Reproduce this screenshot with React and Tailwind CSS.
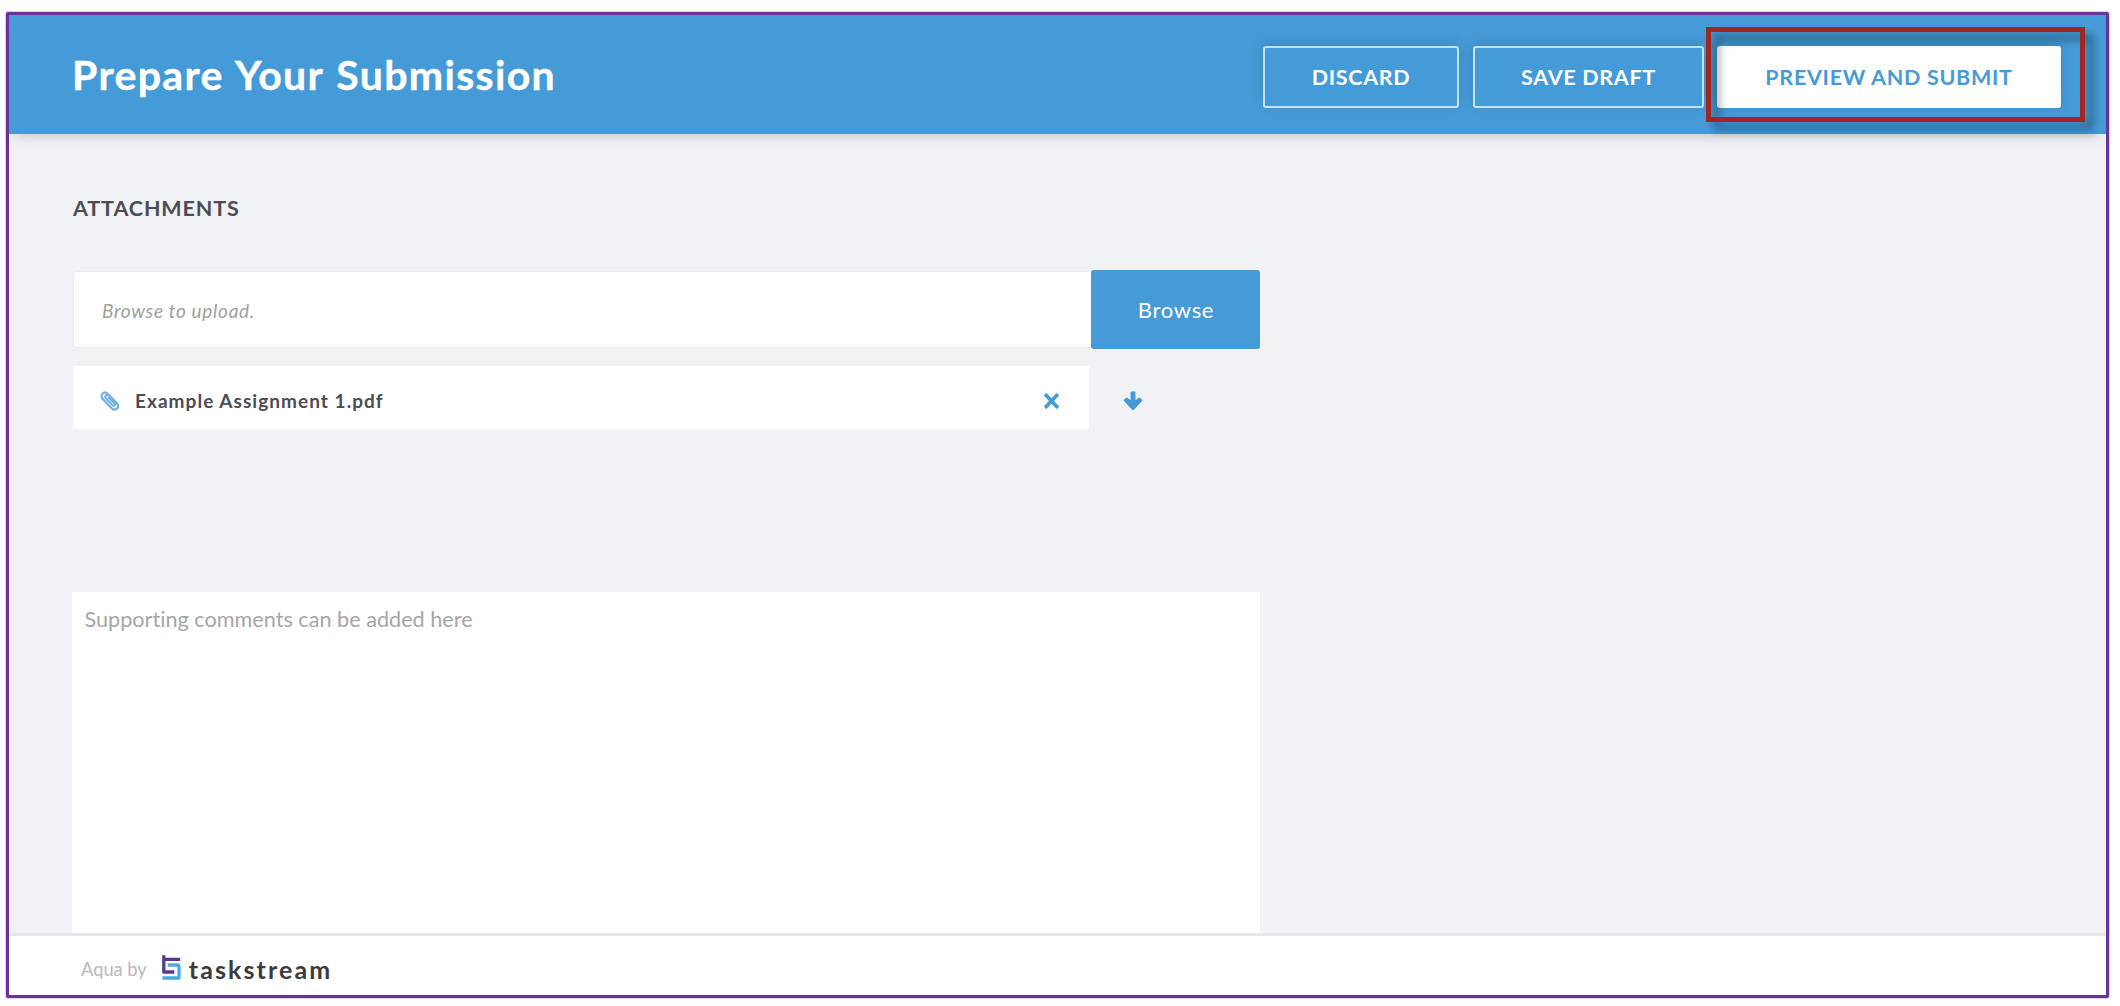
function PaperclipIcon() {
  return (
    <svg className="h-[20px] w-[20px]" viewBox="0 0 20 20" fill="none" stroke="#74afe1" strokeWidth="2.2" strokeLinecap="round" strokeLinejoin="round">
      <path d="M2.2 7.6 L11.6 17.2 C13.4 19 15.6 18.9 17 17.5 C18.4 16.1 18.6 14 16.9 12.2 L7.4 2.5 C6 1.1 3.9 1.2 2.6 2.5 C1.3 3.8 1.2 5.9 2.6 7.3" />
      <path d="M8.2 4.4 C6.6 3.2 4.4 5 5.6 6.9 L12.6 14.2 C14.4 15.6 15.9 13.8 14.6 12.3 L9 6.7" />
    </svg>
  );
}

function CloseIcon() {
  return (
    <svg className="h-[16px] w-[15px]" viewBox="0 0 15 16" fill="none" stroke="#459bd8" strokeWidth="3.7" strokeLinecap="butt">
      <path d="M1.1 1.2 L13.9 14.8 M13.9 1.2 L1.1 14.8" />
    </svg>
  );
}

function ArrowDownIcon() {
  return (
    <svg className="h-[20px] w-[20px]" viewBox="0 0 20 20" fill="#459bd8">
      <path d="M7.5 1.4 Q7.5 .6 8.3 .6 H11.7 Q12.5 .6 12.5 1.4 V9.2 L15.6 6.7 Q16.3 6.2 17 6.8 L19 8.6 Q19.7 9.3 19 10 L10.9 18.7 Q10 19.6 9.1 18.7 L1 10 Q.3 9.3 1 8.6 L3 6.8 Q3.7 6.2 4.4 6.7 L7.5 9.2 Z" />
    </svg>
  );
}

function TaskstreamMark() {
  return (
    <svg className="h-[25px] w-[19px]" viewBox="0 0 19 25" fill="none" strokeWidth="3.3" strokeLinejoin="round">
      <path stroke="#563a92" d="M1.8 0.2 V17 H12.3 M1.7 4.4 H18.2" />
      <path stroke="#4aaae0" d="M5.8 10 H15 Q17 10 17 12 V23 H0.4" />
    </svg>
  );
}

function HeaderButton({ children, className }) {
  return (
    <button
      className={`flex h-[62px] shrink-0 items-center justify-center rounded-[3px] border-2 pt-px text-[21.5px] font-bold tracking-[0.7px] shadow-[0_-3px_13px_rgba(0,0,0,0.13)] ${className}`}
    >
      {children}
    </button>
  );
}

function Header() {
  return (
    <header className="relative z-10 flex h-[119px] shrink-0 items-center bg-[#459bd8] pl-[63px] pr-[45px] text-white shadow-[0_9px_12px_-7px_rgba(0,0,0,0.2)]">
      <h1 className="mr-auto text-[41px] font-bold leading-[50px] tracking-[1.35px] [word-spacing:1.5px] [-webkit-text-stroke:0.4px_white]">
        Prepare Your Submission
      </h1>
      <div className="flex gap-[14px] pt-[4px]">
        <HeaderButton className="w-[196px] border-[#c5e2f3]">DISCARD</HeaderButton>
        <HeaderButton className="w-[231px] border-[#c5e2f3]">SAVE DRAFT</HeaderButton>
        <div className="relative -ml-px">
          <HeaderButton className="w-[344px] border-white bg-white text-[#459bd8]">PREVIEW AND SUBMIT</HeaderButton>
          <div className="pointer-events-none absolute -left-[11px] -top-[19px] h-[95px] w-[379px] border-[5px] border-[#a02622] drop-shadow-[8px_8px_4px_rgba(0,0,0,0.42)]" />
        </div>
      </div>
    </header>
  );
}

export default function App() {
  return (
    <div className="h-[1006px] w-[2120px] overflow-hidden bg-white pl-[6px] pt-[12px] font-['Lato',sans-serif] [font-variant-ligatures:none]">
      <div className="flex h-[986px] w-[2103px] flex-col rounded-[2px] border-[3px] border-[#6a339c] bg-[#f1f2f6] shadow-[0_0_0_1px_rgba(106,51,156,0.22)]">
        <Header />
        <main className="flex min-h-0 flex-1 flex-col pl-[64px]">
          <h2 className="mt-[60px] text-[21.5px] font-bold leading-[28px] tracking-[0.9px] text-[#4c4c53]">ATTACHMENTS</h2>

          <div className="mt-[48px] flex h-[79px] w-[1187px] shrink-0">
            <div className="my-px flex flex-1 items-center rounded-l-[4px] border border-r-0 border-[#e9ebed] bg-white pl-[28px] pt-[3px] text-[19px] italic tracking-[0.7px] text-[#a0a0a0]">
              Browse to upload.
            </div>
            <button className="w-[169px] rounded-[3px] bg-[#459bd8] pl-px text-[22px] tracking-[0.7px] text-white">Browse</button>
          </div>

          <div className="mt-[17px] flex h-[63px] shrink-0 items-center">
            <div className="flex h-full w-[1016px] items-center bg-white pl-[27px] pr-[30px] pt-[6px]">
              <PaperclipIcon />
              <span className="ml-[15px] mr-auto pt-px text-[19px] font-bold tracking-[1.04px] text-[#4c4c53]">Example Assignment 1.pdf</span>
              <CloseIcon />
            </div>
            <div className="ml-[34px] pt-[6px]">
              <ArrowDownIcon />
            </div>
          </div>

          <div className="-ml-px mt-[163px] w-[1188px] flex-1 bg-white pl-[12.5px] pt-[14px] text-[21.65px] leading-[26px] text-[#a6a6a6]">
            Supporting comments can be added here
          </div>
        </main>
        <footer className="flex h-[62px] shrink-0 items-center border-t-[3px] border-[#e6e8ef] bg-white pl-[72px]">
          <span className="pt-[8px] text-[18.3px] text-[#b9b9b9]">Aqua by</span>
          <span className="ml-[15px] pt-[3px]">
            <TaskstreamMark />
          </span>
          <span className="ml-[8px] pt-[6px] text-[25px] font-bold leading-[30px] tracking-[2.1px] text-[#3b3b3d]">taskstream</span>
        </footer>
      </div>
    </div>
  );
}
